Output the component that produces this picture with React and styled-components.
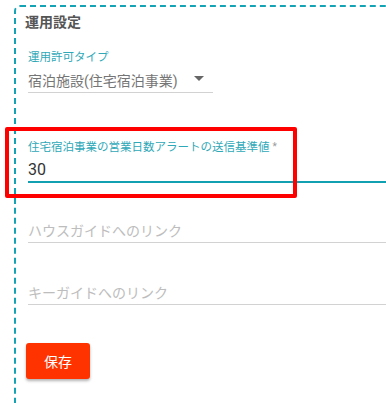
import React from "react";
import styled, { createGlobalStyle } from "styled-components";

const Global = createGlobalStyle`
  html, body { margin: 0; padding: 0; background: #fff; overflow: hidden; }
  body { font-family: Roboto, "Noto Sans CJK JP", sans-serif; }
`;

const Page = styled.div`
  position: relative;
  width: 386px;
  height: 403px;
  overflow: hidden;
  padding: 5px 0 0 14px;
  box-sizing: border-box;
`;

const Panel = styled.section`
  width: 420px;
  min-height: 420px;
  border: 2px dashed #13a3b4;
  border-top-left-radius: 6px;
  box-sizing: border-box;
  padding: 5px 0 0 12px;
  display: flex;
  flex-direction: column;
`;

const Title = styled.h2`
  margin: 0 0 0 -3px;
  font-size: 14px;
  line-height: 20px;
  font-weight: 700;
  color: #555;
  font-family: Roboto, "Noto Sans CJK JP", sans-serif;
`;

const Field = styled.div`
  display: flex;
  flex-direction: column;
  width: ${(p) => p.$width || "358px"};
  margin-top: ${(p) => p.$mt}px;
`;

const Label = styled.label`
  height: 16px;
  font-size: 11.5px;
  line-height: 16px;
  color: #2fa8b7;
  white-space: nowrap;
`;

const Req = styled.span`
  color: #9a9a9a;
  font-size: 10px;
  margin-left: 3px;
  vertical-align: top;
`;

const InputRow = styled.div`
  position: relative;
  height: 28px;
  box-sizing: border-box;
  padding: 6px 0 2px;
  font-size: ${(p) => p.$size || 14}px;
  line-height: 20px;
  color: ${(p) => p.$color || "#333"};
  border-bottom: ${(p) => (p.$focused ? "2px solid #11a0b2" : "1px solid #d2d2d2")};
  display: flex;
  align-items: center;
  white-space: nowrap;
`;

const Arrow = styled.span`
  position: absolute;
  right: 9px;
  top: 11px;
  width: 0;
  height: 0;
  border-left: 5px solid transparent;
  border-right: 5px solid transparent;
  border-top: 5px solid #666;
`;

const Button = styled.button`
  align-self: flex-start;
  margin: 38px 0 0 -2px;
  width: 64px;
  height: 36px;
  border: none;
  border-radius: 3px;
  background: #ff3300;
  color: #fff;
  font-size: 14px;
  font-family: Roboto, "Noto Sans CJK JP", sans-serif;
  box-shadow: 0 2px 3px rgba(0, 0, 0, 0.3);
  cursor: pointer;
`;

const Highlight = styled.div`
  position: absolute;
  left: 5px;
  top: 127px;
  width: 292px;
  height: 71px;
  box-sizing: border-box;
  border: 4px solid #ff0000;
  border-radius: 2px;
  pointer-events: none;
`;

export default function App() {
  return (
    <>
      <Global />
      <Page>
        <Panel>
          <Title>運用設定</Title>
          <Field $mt={17} $width="185px">
            <Label>運用許可タイプ</Label>
            <InputRow $color="#757575">
              宿泊施設(住宅宿泊事業)
              <Arrow />
            </InputRow>
          </Field>
          <Field $mt={46}>
            <Label>
              住宅宿泊事業の営業日数アラートの送信基準値<Req>*</Req>
            </Label>
            <InputRow $focused $size={16}>30</InputRow>
          </Field>
          <Field $mt={16}>
            <Label />
            <InputRow $color="#bdbdbd">ハウスガイドへのリンク</InputRow>
          </Field>
          <Field $mt={18}>
            <Label />
            <InputRow $color="#bdbdbd">キーガイドへのリンク</InputRow>
          </Field>
          <Button>保存</Button>
        </Panel>
        <Highlight />
      </Page>
    </>
  );
}
